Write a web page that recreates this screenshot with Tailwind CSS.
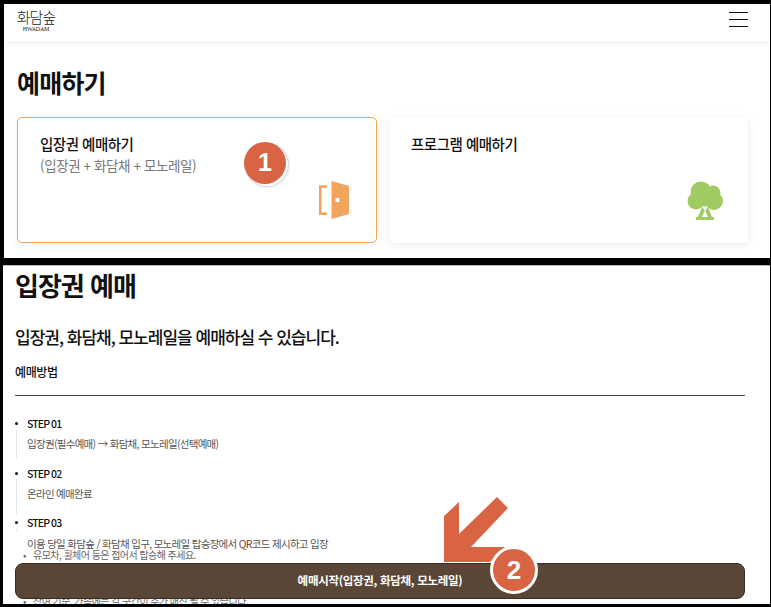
<!DOCTYPE html>
<html lang="ko">
<head>
  <meta charset="UTF-8">
  <meta name="viewport" content="width=device-width, initial-scale=1.0">
  <title>화담숲 예매하기</title>
  <script src="https://cdn.jsdelivr.net/npm/@tailwindcss/browser@4"></script>
</head>
<body class="bg-black font-['Noto_Sans_CJK_KR','Noto_Sans',sans-serif] text-[#111]">
  <div class="relative w-[771px] h-[607px] overflow-hidden bg-black pt-[4px]">

    <!-- 예매하기 -->
    <section class="ml-[4px] w-[766px] h-[254px] bg-white">
      <header class="h-[37px] flex items-center justify-between pl-[13px] pr-[22px] shadow-[0_2px_6px_rgba(0,0,0,0.07)]">
        <div class="flex flex-col items-center w-[38px] mb-[4px]">
          <span class="whitespace-nowrap text-[15px] leading-[18px] tracking-[-1px] font-light text-[#222]">화담숲</span>
          <span class="whitespace-nowrap text-[6px] leading-[7px] tracking-[-0.2px] font-['Liberation_Serif',serif] text-[#222]">HWADAM</span>
        </div>
        <div class="flex flex-col gap-[6px] w-[19px] mb-[6px]">
          <span class="h-px bg-[#111]"></span>
          <span class="h-px bg-[#111]"></span>
          <span class="h-px bg-[#111]"></span>
        </div>
      </header>
      <div class="pl-[13px] pr-[22px]">
        <h1 class="mt-[23px] text-[25px] leading-[36px] font-bold tracking-[-0.8px]">예매하기</h1>
        <div class="mt-[17px] flex gap-[12px]">
          <div class="relative w-[360px] h-[126px] rounded-[5px] border border-[#f0a45c] bg-white pl-[22px] pt-[15px] shadow-[0_2px_10px_rgba(0,0,0,0.06)]">
            <p class="text-[14.5px] leading-[22px] font-medium tracking-[-0.5px]">입장권 예매하기</p>
            <p class="text-[13.5px] leading-[20px] text-[#777] tracking-[-0.4px]">(입장권 + 화담채 + 모노레일)</p>
            <svg class="absolute left-[301px] top-[63px]" width="31" height="38" viewBox="0 0 31 38">
              <path d="M8 5.5H1.3V32.8H8" fill="none" stroke="#f0a45c" stroke-width="2.6"/>
              <path d="M12.5 0L30 5V33L12.5 38Z" fill="#f0a45c"/>
              <circle cx="18.5" cy="19" r="2.2" fill="#fff"/>
            </svg>
          </div>
          <div class="relative w-[359px] h-[126px] rounded-[5px] bg-white pl-[22px] pt-[16px] shadow-[0_2px_10px_rgba(0,0,0,0.08)]">
            <p class="text-[14.5px] leading-[22px] font-medium tracking-[-0.5px]">프로그램 예매하기</p>
            <svg class="absolute left-[298px] top-[64px]" width="36" height="39" viewBox="0 0 36 39">
              <g fill="#a0cb63">
                <circle cx="14" cy="11" r="10.5"/>
                <circle cx="26" cy="12" r="7.5"/>
                <circle cx="9" cy="20" r="8.5"/>
                <circle cx="27" cy="20" r="9"/>
                <circle cx="18" cy="18" r="8"/>
                <path d="M9 36H27V39H9Z"/>
                <path d="M11 36L15 26H21L25 36H21L18 29L15 36Z"/>
              </g>
              <path d="M15 25.5L18 30L21 25.5Z" fill="#fff"/>
            </svg>
          </div>
        </div>
      </div>
    </section>

    <!-- 입장권 예매 -->
    <section class="relative mt-[7px] ml-[3px] w-[767px] h-[339px] bg-white pl-[12px] pr-[25px] overflow-hidden border-t border-[#bbb]">
      <h2 class="text-[26px] leading-[38px] font-bold tracking-[-1px]">입장권 예매</h2>
      <p class="mt-[20px] text-[17px] leading-[26px] font-medium tracking-[-1px]">입장권, 화담채, 모노레일을 예매하실 수 있습니다.</p>
      <p class="mt-[13px] text-[12px] leading-[18px] font-medium tracking-[-0.4px]">예매방법</p>
      <div class="mt-[14px] h-px bg-[#444]"></div>
      <ul class="mt-[19px] text-[10.5px] tracking-[-0.7px]">
        <li class="relative pl-[12px] h-[50px]">
          <span class="absolute left-0 top-[7px] w-[3px] h-[3px] rounded-full bg-[#111]"></span>
          <span class="absolute left-px top-[15px] w-px h-[28px] bg-[#e5e5e5]"></span>
          <p class="leading-[18px] font-medium text-[#111] tracking-[-0.9px]">STEP 01</p>
          <p class="mt-[2px] leading-[18px] text-[#555]">입장권(필수예매) → 화담채, 모노레일(선택예매)</p>
        </li>
        <li class="relative pl-[12px] h-[49px]">
          <span class="absolute left-0 top-[7px] w-[3px] h-[3px] rounded-full bg-[#111]"></span>
          <span class="absolute left-px top-[14px] w-px h-[35px] bg-[#e5e5e5]"></span>
          <p class="leading-[18px] font-medium text-[#111] tracking-[-0.9px]">STEP 02</p>
          <p class="mt-[2px] leading-[18px] text-[#555]">온라인 예매완료</p>
        </li>
        <li class="relative pl-[12px]">
          <span class="absolute left-0 top-[7px] w-[3px] h-[3px] rounded-full bg-[#111]"></span>
          <span class="absolute left-px top-[15px] w-px h-[3px] bg-[#e5e5e5]"></span>
          <p class="leading-[18px] font-medium text-[#111] tracking-[-0.9px]">STEP 03</p>
          <p class="mt-[6px] leading-[12px] text-[#555]">이용 당일 화담숲 / <span class="text-[#8a5a3c]">화</span>담채 입구, 모노레일 탑승장에서 <span class="text-[#7a3a30]">QR</span>코드 제시하고 입장</p>
          <p class="relative ml-[6px] leading-[10px] text-[10px] tracking-[-0.55px] text-[#666] before:content-['•'] before:absolute before:-left-[10px]">유모차, 휠체어 등은 접어서 탑승해 주세요.</p>
          <p class="relative ml-[6px] mt-[35px] leading-[12px] text-[10px] tracking-[-0.55px] text-[#666] before:content-['•'] before:absolute before:-left-[10px]">잔여 기준, 가족에는 각 구간이 추가 매진 될 수 있습니다.</p>
        </li>
      </ul>

      <!-- fixed button -->
      <button class="absolute left-[12px] top-[297px] w-[730px] h-[36px] rounded-[8px] border border-[#3a2c20] bg-[#5a4637] text-white text-[11.5px] font-bold tracking-[-0.3px]">예매시작(입장권, 화담채, 모노레일)</button>
    </section>

    <!-- callouts -->
    <div class="absolute left-[244px] top-[142px] w-[42px] h-[42px] rounded-full bg-[#d96443] text-white flex items-center justify-center text-[25px] font-bold font-['Liberation_Sans',sans-serif] shadow-[2px_2px_0_0_#fff,2px_2px_2px_1px_rgba(170,170,170,0.6)]">1</div>
    <svg class="absolute left-[444px] top-[497px]" width="65" height="66" viewBox="0 0 65 66">
      <path d="M15 5L0 19V65H46L61 50H27L64 11L53 0L15 37Z" fill="#d96443"/>
    </svg>
    <div class="absolute left-[490px] top-[546px] w-[48px] h-[48px] rounded-full border-[3px] border-white bg-[#d96443] text-white flex items-center justify-center text-[26px] font-bold font-['Liberation_Sans',sans-serif]">2</div>
  </div>
</body>
</html>
